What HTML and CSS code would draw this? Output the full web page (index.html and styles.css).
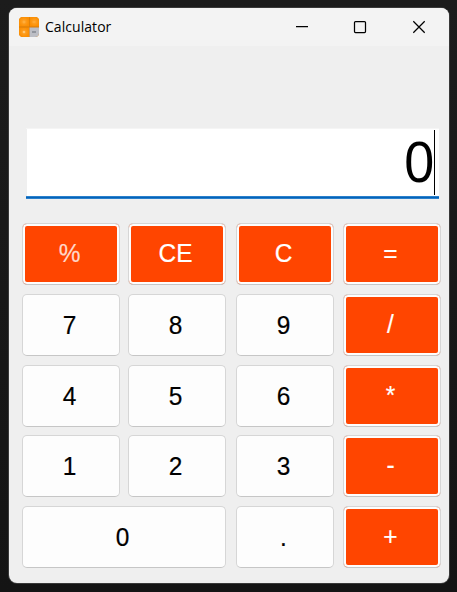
FILE: index.html
```html
<!DOCTYPE html>
<html lang="en">
<head>
<meta charset="utf-8">
<title>Calculator</title>
<link rel="stylesheet" href="styles.css">
</head>
<body>
<main class="window">
  <header class="titlebar">
    <svg class="app-icon" width="20" height="20" viewBox="0 0 20 20">
      <defs>
        <clipPath id="r"><rect width="20" height="20" rx="4"/></clipPath>
        <radialGradient id="g"><stop offset="0" stop-color="#ffa52e"/><stop offset="1" stop-color="#fb8f04"/></radialGradient>
      </defs>
      <g clip-path="url(#r)">
        <rect width="20" height="20" fill="#d67b0a"/>
        <rect width="10" height="9.5" fill="url(#g)"/>
        <rect x="10.7" width="9.5" height="9.5" fill="url(#g)"/>
        <rect y="10.5" width="10" height="9.5" fill="url(#g)"/>
        <rect x="10.5" y="10.5" width="9.5" height="9.5" fill="#bcbec5"/>
        <path d="M3.5 5h3M5 3.5v3M13.5 5h3" stroke="#ffb142"/>
        <circle cx="5" cy="15" r="1.3" fill="#ffc878"/>
        <path d="M13 15h4" stroke="#858891" stroke-width="1.6"/>
      </g>
    </svg>
    <span class="title">Calculator</span>
    <div class="controls">
      <svg width="14" height="14" viewBox="0 0 14 14"><path d="M1 6.5h12"/></svg>
      <svg width="14" height="14" viewBox="0 0 14 14"><rect x="1.5" y="1.5" width="11" height="11" rx="1"/></svg>
      <svg width="14" height="14" viewBox="0 0 14 14"><path d="M1.3 1.3l11.4 11.4M12.7 1.3L1.3 12.7"/></svg>
    </div>
  </header>
  <div class="display"><span class="value">0</span><i class="caret"></i></div>
  <section class="keys">
    <button class="op pale"><span>%</span></button><button class="op"><span>CE</span></button><button class="op"><span>C</span></button><button class="op"><span>=</span></button>
    <button><span>7</span></button><button><span>8</span></button><button><span>9</span></button><button class="op"><span>/</span></button>
    <button><span>4</span></button><button><span>5</span></button><button><span>6</span></button><button class="op"><span>*</span></button>
    <button><span>1</span></button><button><span>2</span></button><button><span>3</span></button><button class="op"><span>-</span></button>
    <button class="zero"><span>0</span></button><button><span>.</span></button><button class="op"><span>+</span></button>
  </section>
</main>
</body>
</html>
```
FILE: styles.css
```css
* { box-sizing: border-box; }

body {
  margin: 0;
  height: 592px;
  padding: 8px 8px 9px 9px;
  background: linear-gradient(#1c1c1c, #141414);
  font-family: "Liberation Sans", Arial, sans-serif;
  overflow: hidden;
}

.window {
  width: 440px;
  height: 575px;
  background: #efefef;
  border-radius: 8px;
  overflow: hidden;
  box-shadow: 0 0 0 1px #393939;
}

.titlebar {
  display: flex;
  align-items: center;
  height: 38px;
  padding: 0 23px 0 10px;
  background: #f3f3f3;
}

.app-icon { margin-top: -1px; }

.title {
  margin: 0 0 1px 6px;
  font: 14px/20px "Open Sans", sans-serif;
  letter-spacing: 0.05px;
  color: #000;
}

.controls {
  display: flex;
  gap: 44px;
  margin-left: auto;
}

.controls svg:last-child { margin-left: 1px; }

.controls svg {
  fill: none;
  stroke: #000;
  stroke-width: 1.25;
}

.display {
  display: flex;
  justify-content: flex-end;
  height: 71px;
  margin: 82px 10px 0 17px;
  padding: 1px 4px 0 0;
  background:
    linear-gradient(#3b8ed6, #0563b8 50%, #3b8ed6) 0 100% / 100% 3px no-repeat,
    linear-gradient(#efefef, #efefef) 0 0 / 1px 100% no-repeat,
    #fff;
  border-top: 1px solid #f5f5f5;
  font-size: 58px;
  line-height: 63px;
  color: #000;
}

.value {
  transform: scaleX(0.93);
  transform-origin: 100% 50%;
}

.caret {
  width: 1px;
  height: 65px;
  background: #000;
}

.keys {
  display: grid;
  grid-template-columns: 106px 108px 107px 98px;
  grid-template-rows: 71px 71px 70px 71px 62px;
  margin: 24px 0 0 13px;
}

button {
  width: 98px;
  height: 62px;
  padding: 0 3px 0 0;
  border: 1.5px solid #d6d6d6;
  border-bottom-color: #c6c6c6;
  border-radius: 5px;
  background: #fdfdfd;
  font: 26px/58px "Liberation Sans", Arial, sans-serif;
  color: #000;
}

button span {
  display: block;
  transform: scaleX(0.94);
  -webkit-text-stroke: 0.2px;
}

.op {
  padding-bottom: 2px;
  background: #ff4500;
  color: #fff;
  box-shadow: inset 0 0 0 2px #fdfdfd;
}

.pale { color: #ffd8ca; }

.zero {
  grid-column: span 2;
  width: 204px;
}
```
